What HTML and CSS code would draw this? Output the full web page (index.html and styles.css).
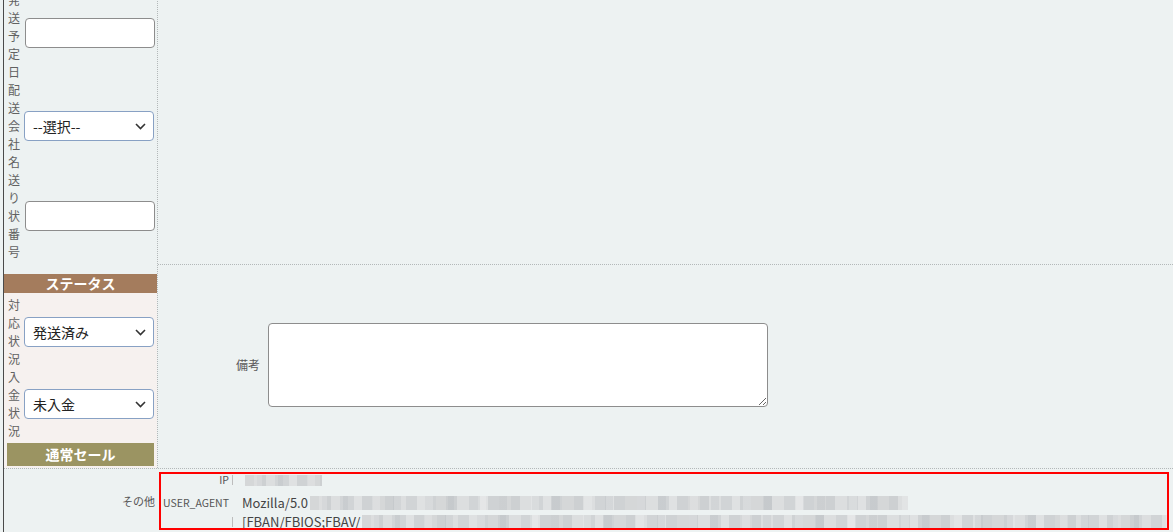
FILE: index.html
```html
<!DOCTYPE html>
<html lang="ja">
<head>
  <meta charset="UTF-8">
  <meta name="viewport" content="width=device-width, initial-scale=1.0">
  <title>受注詳細</title>
  <link rel="stylesheet" href="styles.css">
</head>
<body>
  <div class="page">
    <div class="upper">
      <aside class="side">
        <div class="ship">
          <div class="row">
            <div class="vlabel">発送予定日</div>
            <input type="text" class="text-input field-first">
          </div>
          <div class="row">
            <div class="vlabel">配送会社名</div>
            <div class="select">
              <select>
                <option>--選択--</option>
              </select>
              <svg width="11" height="7" viewBox="0 0 11 7"><path d="M1 1l4.5 4.5L10 1" fill="none" stroke="#333" stroke-width="1.6"/></svg>
            </div>
          </div>
          <div class="row">
            <div class="vlabel">送り状番号</div>
            <input type="text" class="text-input">
          </div>
        </div>

        <div class="status">
          <div class="status-head">ステータス</div>
          <div class="status-body">
            <div class="row">
              <div class="vlabel">対応状況</div>
              <div class="select">
                <select>
                  <option>発送済み</option>
                </select>
                <svg width="11" height="7" viewBox="0 0 11 7"><path d="M1 1l4.5 4.5L10 1" fill="none" stroke="#333" stroke-width="1.6"/></svg>
              </div>
            </div>
            <div class="row">
              <div class="vlabel">入金状況</div>
              <div class="select">
                <select>
                  <option>未入金</option>
                </select>
                <svg width="11" height="7" viewBox="0 0 11 7"><path d="M1 1l4.5 4.5L10 1" fill="none" stroke="#333" stroke-width="1.6"/></svg>
              </div>
            </div>
          </div>
          <div class="sale">通常セール</div>
        </div>
      </aside>

      <section class="main">
        <div class="main-top"></div>
        <div class="main-bottom">
          <label class="field-label" for="note">備考</label>
          <textarea id="note"></textarea>
        </div>
      </section>
    </div>

    <div class="lower">
      <div class="lower-label">その他</div>
      <div class="info">
        <div class="info-row info-ip">
          <span class="key">IP</span>
          <span class="sep"></span>
          <span class="blur blur-ip"></span>
        </div>
        <div class="info-row">
          <span class="key">USER_AGENT</span>
          <span class="sep is-blank"></span>
          <span class="val">Mozilla/5.0</span><span class="blur blur-ua1"></span>
        </div>
        <div class="info-row">
          <span class="key"></span>
          <span class="sep"></span>
          <span class="val">[FBAN/FBIOS;FBAV/</span><span class="blur blur-ua2"></span>
        </div>
      </div>
    </div>
  </div>
</body>
</html>
```

FILE: styles.css
```css
body {
  margin: 0;
  background-color: #edf2f2;
  color: #555;
  font-family: "Noto Sans CJK JP", "Noto Sans", sans-serif;
}
.page {
  margin: -9px 0 0 3px;
  border-left: 1px solid #4a4a4a;
  min-height: 560px;
}
.upper {
  display: flex;
  border-bottom: 1px dotted #b3b8b9;
}
.side {
  width: 153px;
  border-right: 1px dotted #b3b8b9;
}
.ship {
  padding-bottom: 13px;
}
.row {
  display: flex;
  align-items: center;
}
.vlabel {
  width: 12px;
  padding-left: 4px;
  margin-right: 4px;
  font-size: 12px;
  line-height: 18px;
  color: #616161;
  word-break: break-all;
}
.text-input {
  width: 130px;
  height: 30px;
  box-sizing: border-box;
  margin: 0 0 0 1px;
  border: 1px solid #8d8d8d;
  border-radius: 4px;
  background-color: #fff;
}
.field-first {
  margin-bottom: 7px;
}
.select {
  position: relative;
  width: 130px;
}
.select select {
  appearance: none;
  -webkit-appearance: none;
  width: 130px;
  height: 30px;
  box-sizing: border-box;
  margin: 0;
  padding: 0 24px 0 8px;
  border: 1px solid #88a1c4;
  border-radius: 4px;
  background-color: #fff;
  color: #222;
  font-family: "Noto Sans CJK JP", sans-serif;
  font-size: 14px;
}
.select svg {
  position: absolute;
  right: 8px;
  top: 12px;
  pointer-events: none;
}
.status {
  background-color: #f6f1ef;
  padding-bottom: 2px;
}
.status-head {
  background-color: #a47c5d;
  color: #fff;
  font-weight: bold;
  font-size: 14px;
  line-height: 19px;
  text-align: center;
}
.status-body {
  padding: 3px 0;
}
.sale {
  margin: 0 3px;
  background-color: #9b9462;
  color: #fff;
  font-weight: bold;
  font-size: 14px;
  line-height: 23px;
  text-align: center;
}
.main {
  flex: 1;
  display: flex;
  flex-direction: column;
}
.main-top {
  height: 273px;
  border-bottom: 1px dotted #b3b8b9;
}
.main-bottom {
  flex: 1;
  display: flex;
  align-items: center;
  padding-bottom: 4px;
}
.field-label {
  width: 110px;
  box-sizing: border-box;
  padding-right: 8px;
  text-align: right;
  font-size: 12px;
  color: #5a5a5a;
}
.main-bottom textarea {
  width: 500px;
  height: 84px;
  box-sizing: border-box;
  margin: 0;
  border: 1px solid #8d8d8d;
  border-radius: 4px;
  background-color: #fff;
}
.lower {
  display: flex;
  align-items: center;
  padding-top: 3px;
}
.lower-label {
  width: 153px;
  box-sizing: border-box;
  padding-right: 2px;
  text-align: right;
  font-size: 11px;
  color: #555;
}
.info {
  flex: 1;
  height: 54px;
  margin: 0 4px 0 2px;
  border: 2px solid #ff0000;
  overflow: hidden;
}
.info-row {
  display: flex;
  align-items: center;
  height: 19px;
  white-space: nowrap;
}
.info-ip {
  align-items: flex-start;
  line-height: 12px;
}
.key {
  width: 68px;
  flex: none;
  text-align: right;
  font-size: 10.5px;
  color: #555;
}
.sep {
  width: 1px;
  height: 10px;
  flex: none;
  margin: 0 9px 0 3px;
  background-color: #bdbdbd;
}
.info-ip .sep {
  margin-top: 1px;
}
.sep.is-blank {
  visibility: hidden;
}
.val {
  font-size: 13px;
  color: #444;
}
.blur {
  display: inline-block;
  height: 14px;
  flex: none;
  background:
    repeating-linear-gradient(90deg, rgba(255,255,255,0) 0 9px, rgba(255,255,255,.18) 9px 17px, rgba(255,255,255,0) 17px 30px, rgba(170,176,182,.2) 30px 38px, rgba(255,255,255,0) 38px 53px),
    repeating-linear-gradient(90deg, #d5d7d8 0 12px, #cdd0d2 12px 21px, #dcdedf 21px 33px, #d1d4d6 33px 44px, #dfe1e2 44px 52px, #cfd2d4 52px 63px);
}
.blur-ip {
  width: 77px;
  height: 11px;
  margin: 1px 0 0 3px;
}
.blur-ua1 {
  width: 598px;
  margin-left: 2px;
}
.blur-ua2 {
  width: 805px;
  margin-left: 2px;
}
```
